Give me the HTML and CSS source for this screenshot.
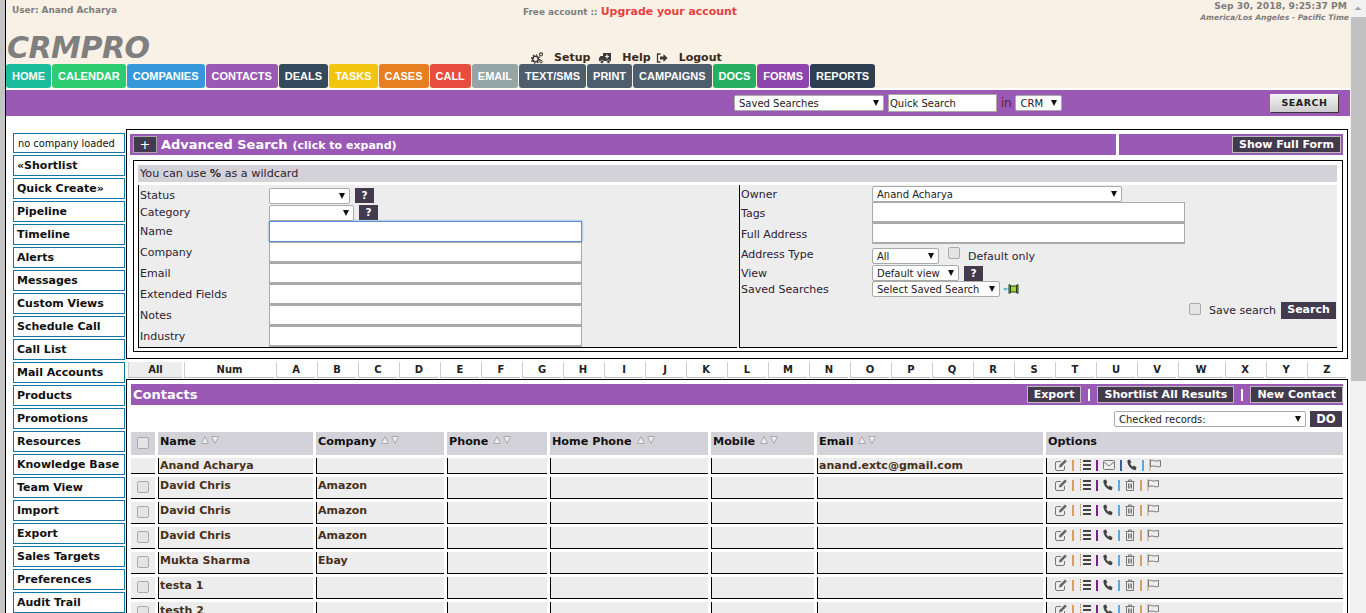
FILE: index.html
```html
<!DOCTYPE html>
<html lang="en">
<head>
    <meta charset="UTF-8">
    <title>CRMPRO</title>
    <link rel="stylesheet" href="styles.css">
</head>
<body>
<div class="window">
    <div class="edge"></div>
    <div class="page">
        <div class="top">
            <div class="top-info">
                <div class="user">User: Anand Acharya</div>
                <div class="account">Free account :: <a class="upgrade">Upgrade your account</a></div>
                <div class="clock"><span class="clock-date">Sep 30, 2018, 9:25:37 PM</span><br><em>America/Los Angeles - Pacific Time</em></div>
            </div>
            <div class="logo-row">
                <div class="logo">CRMPRO</div>
                <div class="top-links">
                    <svg class="tl-icon" viewBox="0 0 12 12"><circle cx="4.500" cy="7" r="2.800" fill="none" stroke="#3a3a3a" stroke-width="1.600"/><circle cx="4.500" cy="7" r="4.200" fill="none" stroke="#3a3a3a" stroke-width="1.200" stroke-dasharray="1.500 1.800"/><circle cx="10" cy="2.400" r="1.500" fill="none" stroke="#3a3a3a" stroke-width="1.100"/><circle cx="10" cy="9.600" r="1.300" fill="none" stroke="#3a3a3a"/></svg>
                    <span>Setup</span>
                    <svg class="tl-icon" viewBox="0 0 12 12"><path d="M4 1h8v8H4zM1.500 4H4v5H0V6z" fill="#3a3a3a"/><circle cx="3" cy="9.800" r="1.700" fill="#3a3a3a" stroke="#f9f1e6" stroke-width=".5"/><circle cx="9.500" cy="9.800" r="1.700" fill="#3a3a3a" stroke="#f9f1e6" stroke-width=".5"/><path d="M8 2.500v4M6 4.500h4" stroke="#f9f1e6" stroke-width="1.200"/></svg>
                    <span>Help</span>
                    <svg class="tl-icon out" viewBox="0 0 12 12"><path d="M4.500 2H1.500v8h3" fill="none" stroke="#3a3a3a" stroke-width="1.300"/><path d="M4 4.500h3.500V2l4 4-4 4V7.500H4z" fill="#3a3a3a"/></svg>
                    <span>Logout</span>
                </div>
            </div>
            <div class="tabs">
                <a class="tab" style="background:#1abc9c">HOME</a>
                <a class="tab" style="background:#2ecc71">CALENDAR</a>
                <a class="tab" style="background:#3498db">COMPANIES</a>
                <a class="tab" style="background:#9b59b6">CONTACTS</a>
                <a class="tab" style="background:#34495e">DEALS</a>
                <a class="tab" style="background:#f1c40f">TASKS</a>
                <a class="tab" style="background:#e67e22">CASES</a>
                <a class="tab" style="background:#e74c3c">CALL</a>
                <a class="tab" style="background:#95a5a6">EMAIL</a>
                <a class="tab" style="background:#4e5d6c">TEXT/SMS</a>
                <a class="tab" style="background:#4e5d6c">PRINT</a>
                <a class="tab" style="background:#4e5d6c">CAMPAIGNS</a>
                <a class="tab" style="background:#27ae60">DOCS</a>
                <a class="tab" style="background:#8e44ad">FORMS</a>
                <a class="tab" style="background:#2c3e50">REPORTS</a>
            </div>
        </div>

        <div class="searchbar">
            <div class="sel sel-saved">Saved Searches<i class="arrow"></i></div>
            <div class="quick">Quick Search</div>
            <span class="in">in</span>
            <div class="sel sel-crm">CRM<i class="arrow"></i></div>
            <div class="search-btn">SEARCH</div>
        </div>

        <div class="content">
            <div class="side">
                <div class="side-item plain">no company loaded</div>
                <div class="side-item">«Shortlist</div>
                <div class="side-item">Quick Create»</div>
                <div class="side-item">Pipeline</div>
                <div class="side-item">Timeline</div>
                <div class="side-item">Alerts</div>
                <div class="side-item">Messages</div>
                <div class="side-item">Custom Views</div>
                <div class="side-item">Schedule Call</div>
                <div class="side-item">Call List</div>
                <div class="side-item">Mail Accounts</div>
                <div class="side-item">Products</div>
                <div class="side-item">Promotions</div>
                <div class="side-item">Resources</div>
                <div class="side-item">Knowledge Base</div>
                <div class="side-item">Team View</div>
                <div class="side-item">Import</div>
                <div class="side-item">Export</div>
                <div class="side-item">Sales Targets</div>
                <div class="side-item">Preferences</div>
                <div class="side-item">Audit Trail</div>
            </div>

            <div class="main">
                <div class="adv">
                    <div class="adv-head">
                        <div class="bar bar-title"><span class="plus">+</span><b class="adv-title">Advanced Search</b><b class="adv-sub">(click to expand)</b></div>
                        <div class="bar bar-right"><span class="dark-btn">Show Full Form</span></div>
                    </div>
                    <div class="adv-form">
                        <div class="wild">You can use <b>%</b> as a wildcard</div>
                        <div class="form-cols">
                            <div class="form-col left-col">
                                <div class="row r-status"><label>Status</label><div class="sel s-status"><i class="arrow"></i></div><span class="q">?</span></div>
                                <div class="row r-cat"><label>Category</label><div class="sel s-cat"><i class="arrow"></i></div><span class="q">?</span></div>
                                <div class="row r-input"><label>Name</label><div class="field focus"></div></div>
                                <div class="row r-input"><label>Company</label><div class="field"></div></div>
                                <div class="row r-input"><label>Email</label><div class="field"></div></div>
                                <div class="row r-input"><label>Extended Fields</label><div class="field"></div></div>
                                <div class="row r-input"><label>Notes</label><div class="field"></div></div>
                                <div class="row r-input"><label>Industry</label><div class="field"></div></div>
                            </div>
                            <div class="form-col right-col">
                                <div class="row r-owner"><label>Owner</label><div class="sel s-owner">Anand Acharya<i class="arrow"></i></div></div>
                                <div class="row r-input"><label>Tags</label><div class="field"></div></div>
                                <div class="row r-input"><label>Full Address</label><div class="field"></div></div>
                                <div class="row r-type"><label>Address Type</label><div class="sel s-all">All<i class="arrow"></i></div><span class="check"></span><span class="chk-label">Default only</span></div>
                                <div class="row r-view"><label>View</label><div class="sel s-view">Default view<i class="arrow"></i></div><span class="q">?</span></div>
                                <div class="row r-saved"><label>Saved Searches</label><div class="sel s-sel">Select Saved Search<i class="arrow"></i></div>
                                    <svg class="pin" viewBox="0 0 16 10"><path d="M0 5l3-1.500v3z" fill="#3ab5c0"/><path d="M3 5h3" stroke="#3ab5c0"/><path d="M6 .5 8.500 2h4L15 .5v9L12.500 8h-4L6 9.500z" fill="#a8d838" stroke="#1f3a10"/><path d="M7.500 1v8M13.500 1v8" stroke="#1f3a10"/></svg>
                                </div>
                                <div class="row r-save"><span class="check"></span><span class="chk-label">Save search</span><span class="dark-solid">Search</span></div>
                            </div>
                        </div>
                    </div>
                </div>

                <div class="alpha">
                    <a class="active">All</a>
                    <a>Num</a>
                    <a>A</a><a>B</a><a>C</a><a>D</a><a>E</a><a>F</a><a>G</a><a>H</a><a>I</a><a>J</a><a>K</a><a>L</a><a>M</a><a>N</a><a>O</a><a>P</a><a>Q</a><a>R</a><a>S</a><a>T</a><a>U</a><a>V</a><a>W</a><a>X</a><a>Y</a><a>Z</a>
                </div>

                <div class="contacts">
                    <div class="bar contacts-head">
                        <b class="contacts-title">Contacts</b>
                        <div class="contacts-actions">
                            <span class="dark-btn">Export</span><i class="pipe"></i>
                            <span class="dark-btn">Shortlist All Results</span><i class="pipe"></i>
                            <span class="dark-btn">New Contact</span>
                        </div>
                    </div>
                    <div class="bulk">
                        <div class="sel s-checked">Checked records:<i class="arrow"></i></div>
                        <span class="do">DO</span>
                    </div>
                    <table class="grid">
                        <colgroup>
                            <col class="c-check"><col class="c-name"><col class="c-company"><col class="c-phone"><col class="c-home"><col class="c-mobile"><col class="c-email"><col>
                        </colgroup>
                        <thead>
                            <tr id="head"></tr>
                        </thead>
                        <tbody id="rows"></tbody>
                    </table>
                </div>
            </div>
        </div>
    </div>
    <div class="scrollbar">
        <svg class="scroll-up" viewBox="0 0 16 17"><path d="M4.500 10 8 6.500l3.500 3.500z" fill="#a3a3a3"/></svg>
        <div class="thumb"></div>
    </div>
</div>
<script>
    // table header
    const sort = '<svg class="sort" viewBox="0 0 19 8"><path d="M4 .5 7.500 7.500H.5zM10.500.5h7L14 7.500z" fill="#eee" stroke="#aaa"/></svg>';
    const columns = ['Name', 'Company', 'Phone', 'Home Phone', 'Mobile', 'Email'];
    document.getElementById('head').innerHTML =
        '<th class="center"><span class="check"></span></th>' +
        columns.map(c => `<th>${c} ${sort}</th>`).join('') +
        '<th>Options</th>';

    // option icons
    const icons = {
        edit: '<svg class="ico" viewBox="0 0 12 12"><path d="M9.500 7v3a1.500 1.500 0 0 1-1.500 1.500H2A1.500 1.500 0 0 1 .5 10V4A1.500 1.500 0 0 1 2 2.500h4" fill="none" stroke="#777"/><path d="M4 8.500l.5-2.500L10 .5l1.800 1.800L6.300 8z" fill="#666"/></svg>',
        list: '<svg class="ico" viewBox="0 0 12 12"><path d="M4 2h8M4 6h8M4 10h8" stroke="#444" stroke-width="1.800"/><path d="M1.500 0v12" stroke="#b58a5a" stroke-dasharray="1.500 1"/></svg>',
        mail: '<svg class="ico" viewBox="0 0 12 12"><rect x=".5" y="1.500" width="11" height="9" rx="1" fill="none" stroke="#777"/><path d="M1 3l5 4 5-4" fill="none" stroke="#777"/></svg>',
        phone: '<svg class="ico narrow" viewBox="0 0 10 12"><path d="M1.200 1 3 .5l1.300 3-1.100 1c.5 1.400 1.200 2.400 2.500 3.200l1-1.200 2.800 1.700-.5 2.200c-.3.700-1.100.9-1.900.7C3.500 9.800 1 7 .4 3 .2 2 .6 1.300 1.200 1z" fill="#444"/></svg>',
        trash: '<svg class="ico narrow" viewBox="0 0 10 12"><path d="M.5 2.500h9M3.500 2.500V1h3v1.500M1.500 2.500v9h7v-9M3.500 4.500v5M5 4.500v5M6.500 4.500v5" fill="none" stroke="#777"/></svg>',
        flag: '<svg class="ico" viewBox="0 0 12 12"><path d="M1 0v12" stroke="#b59a70"/><path d="M1.500 1.500c3-1 3.500 1 6 .5L11.500 1.500v6c-3 1-4.500-.5-6.500-.5-1 0-2.500.5-3.500.5z" fill="none" stroke="#777"/></svg>'
    };
    const sep = c => `<i class="sep" style="background:${c}"></i>`;
    const contacts = [
        ['Anand Acharya', '', 'anand.extc@gmail.com', true],
        ['David Chris', 'Amazon', ''],
        ['David Chris', 'Amazon', ''],
        ['David Chris', 'Amazon', ''],
        ['Mukta Sharma', 'Ebay', ''],
        ['testa 1', '', ''],
        ['testh 2', '', '']
    ];
    document.getElementById('rows').innerHTML = contacts.map(c => {
        const opts = c[3]
            ? icons.edit + sep('#d8a060') + icons.list + sep('#7a1f8a') + icons.mail + sep('#3a5f9a') + icons.phone + sep('#5aa8dc') + icons.flag
            : icons.edit + sep('#d8a060') + icons.list + sep('#7a1f8a') + icons.phone + sep('#5aa8dc') + icons.trash + sep('#d8a060') + icons.flag;
        return `<tr class="${c[3] ? 'me' : ''}">
            <td class="center">${c[3] ? '' : '<span class="check"></span>'}</td>
            <td>${c[0]}</td><td>${c[1]}</td><td></td><td></td><td></td><td>${c[2]}</td>
            <td class="opts">${opts}</td></tr>`;
    }).join('');
</script>
</body>
</html>
```

FILE: styles.css
```css
* {
    box-sizing: border-box;
}
html, body {
    margin: 0;
    padding: 0;
    height: 100%;
    overflow: hidden;
}
body {
    font-family: "DejaVu Sans", Verdana, sans-serif;
    font-size: 11px;
    color: #222;
    background: #fff;
}
.window {
    display: flex;
    height: 613px;
    overflow: hidden;
}
.edge {
    width: 6px;
    flex: none;
    background: #c4c4c4;
    border-right: 1px solid #000;
}
.page {
    width: 1344px;
    flex: none;
    overflow: hidden;
}
.scrollbar {
    width: 16px;
    flex: none;
    background: #f1f1f1;
}
.scroll-up {
    display: block;
    width: 16px;
    height: 17px;
}
.thumb {
    height: 364px;
    margin-left: 1px;
    width: 15px;
    background: #c1c1c1;
}

/* top area */
.top {
    height: 88px;
    background: #f9f1e6;
    display: flex;
    flex-direction: column;
}
.top-info {
    height: 33px;
    display: flex;
    justify-content: space-between;
    font-weight: bold;
    color: #7d7d7d;
}
.user {
    width: 517px;
    padding: 5px 0 0 6px;
    font-size: 8.900px;
}
.account {
    flex: 1;
    padding-top: 5px;
    font-size: 8.900px;
}
.upgrade {
    color: #e8403c;
    font-size: 10.900px;
}
.clock {
    text-align: right;
    padding-right: 1px;
    font-size: 9.200px;
    line-height: 11px;
}
.clock-date {
    margin-right: 2px;
}
.clock em {
    font-size: 7.600px;
}
.logo-row {
    height: 31px;
    display: flex;
}
.logo {
    width: 525px;
    padding-left: 1px;
    font-size: 30px;
    line-height: 30px;
    font-weight: bold;
    font-style: italic;
    color: #7f7f7f;
    letter-spacing: -.5px;
}
.top-links {
    display: flex;
    align-items: flex-end;
    font-size: 11px;
    font-weight: bold;
    color: #3b2a1a;
    line-height: 12px;
}
.top-links span {
    margin-right: 9px;
}
.tl-icon {
    width: 12px;
    height: 12px;
    margin-right: 11px;
}
.tl-icon.out {
    margin-left: -4px;
}
.tabs {
    height: 24px;
    display: flex;
    gap: 1px;
}
.tab {
    height: 24px;
    padding: 0 6px;
    border-radius: 3px;
    color: #fff;
    font-family: "Liberation Sans", Arial, sans-serif;
    font-size: 11px;
    font-weight: bold;
    line-height: 25px;
}

/* search strip */
.searchbar {
    height: 26px;
    margin-top: 2px;
    background: #9b59b6;
    display: flex;
    align-items: center;
    padding-left: 728px;
}
.sel {
    position: relative;
    height: 16px;
    background: #fff;
    border: 1px solid #aaa;
    border-radius: 2px;
    font-size: 10px;
    line-height: 15px;
    padding-left: 4px;
    color: #222;
    white-space: nowrap;
}
.arrow {
    position: absolute;
    right: 4px;
    top: 4px;
    border-left: 3.500px solid transparent;
    border-right: 3.500px solid transparent;
    border-top: 6px solid #111;
}
.sel-saved {
    width: 150px;
}
.quick {
    width: 109px;
    height: 18px;
    margin-left: 4px;
    background: #fff;
    border: 1px solid #aaa;
    padding-left: 1px;
    font-size: 10px;
    line-height: 17px;
}
.in {
    margin: 0 4px 0 4px;
    color: #5a1f10;
    font-size: 11.500px;
}
.sel-crm {
    width: 47px;
}
.search-btn {
    width: 68px;
    height: 18px;
    margin: -1px 0 0 208px;
    background: linear-gradient(#f4f4f4, #ccc);
    box-shadow: 1px 1px 0 #333;
    text-align: center;
    font-weight: bold;
    font-size: 9.500px;
    letter-spacing: .5px;
    line-height: 17px;
}

/* sidebar and main */
.content {
    display: flex;
    padding: 13px 0 0 7px;
}
.side {
    width: 113px;
    flex: none;
    display: flex;
    flex-direction: column;
    gap: 2px;
    padding: 4px 1px 0 0;
}
.side-item {
    height: 21px;
    border: 1px solid #0f76a8;
    font-size: 11px;
    font-weight: bold;
    color: #111;
    padding-left: 3px;
    line-height: 19px;
    white-space: nowrap;
}
.side-item.plain {
    height: 20px;
    padding-left: 4px;
    font-size: 9.800px;
    font-weight: normal;
}
.main {
    width: 1222px;
    flex: none;
}
.adv {
    height: 230px;
    border: 1px solid #000;
    padding: 4px 4px 0 3px;
}
.adv-head {
    display: flex;
    gap: 3px;
    height: 21px;
}
.bar {
    background: #9b59b6;
    color: #fff;
}
.bar-title {
    width: 986px;
    display: flex;
    align-items: center;
    padding-left: 3px;
    white-space: nowrap;
}
.bar-right {
    flex: 1;
    display: flex;
    justify-content: flex-end;
    align-items: center;
    padding-right: 2px;
}
.plus {
    width: 24px;
    height: 17px;
    background: #433a4d;
    border: 1px solid #aaa;
    text-align: center;
    font-size: 13px;
    line-height: 16px;
    margin-right: 4px;
}
.adv-title {
    font-size: 13px;
}
.adv-sub {
    font-size: 11px;
    margin: 1px 0 0 5px;
}
.dark-btn {
    display: inline-block;
    height: 17px;
    padding: 0 6px;
    background: #433a4d;
    border: 1px solid #bbb;
    color: #fff;
    font-size: 11px;
    font-weight: bold;
    line-height: 16px;
}
.adv-form {
    margin: 5px 0 0 3px;
    height: 192px;
    border: 1px solid #000;
    padding: 4px 5px 0 4px;
}
.wild {
    height: 17px;
    background: #d4d2d9;
    font-size: 11.200px;
    line-height: 18px;
    padding-left: 2px;
    color: #2c2233;
}
.form-cols {
    display: flex;
    gap: 2px;
    margin-top: 3px;
    height: 163px;
    background: #ededed;
}
.form-col {
    border-left: 1px solid #000;
    border-bottom: 1px solid #000;
    padding-left: 1px;
}
.left-col {
    width: 599px;
    padding-top: 2px;
}
.right-col {
    flex: 1;
    padding-top: 1px;
}
.row {
    display: flex;
    align-items: center;
}
.row label {
    flex: none;
    width: 129px;
    font-size: 11px;
    color: #2c2233;
    white-space: nowrap;
}
.right-col label {
    width: 131px;
}
.right-col .r-input label,
.r-saved label {
    margin-top: 1px;
}
.field {
    width: 313px;
    height: 21px;
    background: #fff;
    border: 1px solid #aaa;
    border-bottom-width: 2px;
}
.field.focus {
    border: 1px solid #5b8fd9;
    box-shadow: 0 0 2px #5b8fd9;
}
.q {
    width: 19px;
    height: 15px;
    margin-left: 5px;
    background: #433a4d;
    color: #fff;
    text-align: center;
    font-size: 10.500px;
    font-weight: bold;
    line-height: 15px;
}
.r-status,
.r-cat {
    height: 17px;
}
.r-input {
    height: 21px;
}
.s-status {
    width: 81px;
}
.s-cat {
    width: 85px;
}
.r-owner {
    height: 16px;
}
.s-owner {
    width: 250px;
}
.r-type {
    height: 21px;
}
.s-all {
    width: 67px;
    margin-top: 3px;
}
.check {
    display: inline-block;
    flex: none;
    width: 12px;
    height: 12px;
    background: #e4e4e4;
    border: 1px solid #aaa;
    border-radius: 2px;
}
.r-type .check {
    margin: 0 8px 3px 9px;
}
.chk-label {
    font-size: 11px;
    color: #2c2233;
}
.r-type .chk-label {
    margin-top: 3px;
}
.r-view,
.r-saved {
    height: 16px;
}
.s-view {
    width: 87px;
}
.s-sel {
    width: 128px;
}
.pin {
    width: 16px;
    height: 10px;
    margin-left: 3px;
}
.r-save {
    justify-content: flex-end;
    padding: 5px 1px 0 0;
}
.r-save .check {
    margin: 0 8px 3px 0;
}
.dark-solid {
    margin-left: 5px;
    width: 55px;
    height: 17px;
    background: #433a4d;
    color: #fff;
    text-align: center;
    font-weight: bold;
    font-size: 11px;
    line-height: 16px;
}

/* letters */
.alpha {
    display: grid;
    grid-template-columns: 56px 92px repeat(22, 41px) 47px repeat(3, 41px);
    height: 20px;
    padding: 3px 0 0 1px;
    text-align: center;
    font-weight: bold;
    font-size: 10px;
    line-height: 15px;
}
.alpha a {
    height: 16px;
    margin: 0 1px 0 1px;
    border-bottom: 1px solid #bbb;
    border-left: 1px solid #ccc;
}
.alpha .active {
    background: #ededed;
}

/* contacts */
.contacts {
    border: 1px solid #000;
    padding: 4px 4px 0 4px;
    height: 300px;
}
.contacts-head {
    height: 21px;
    display: flex;
    justify-content: space-between;
    align-items: center;
}
.contacts-title {
    font-size: 13px;
    padding-left: 2px;
}
.contacts-actions {
    display: flex;
    align-items: center;
    gap: 7px;
}
.pipe {
    width: 2px;
    height: 12px;
    background: #fff;
}
.bulk {
    height: 27px;
    display: flex;
    justify-content: flex-end;
    align-items: center;
    padding-right: 1px;
}
.s-checked {
    width: 192px;
}
.do {
    width: 32px;
    height: 16px;
    margin-left: 4px;
    background: #433a4d;
    color: #fff;
    text-align: center;
    font-weight: bold;
    font-size: 11.500px;
    line-height: 16px;
}
.grid {
    width: calc(100% + 6px);
    table-layout: fixed;
    border-collapse: separate;
    border-spacing: 3px;
    margin: -3px 0 0 -3px;
}
.c-check { width: 24px; }
.c-name { width: 155px; }
.c-company { width: 128px; }
.c-phone { width: 100px; }
.c-home { width: 158px; }
.c-mobile { width: 103px; }
.c-email { width: 226px; }
.grid th {
    height: 23px;
    background: #d4d2d9;
    color: #111;
    font-size: 11.200px;
    text-align: left;
    padding: 0 0 5px 2px;
    white-space: nowrap;
}
.sort {
    width: 19px;
    height: 8px;
    margin-left: 1px;
    vertical-align: 1px;
}
.grid td {
    height: 22px;
    padding: 0 0 4px 1px;
    background: #ededed;
    border-bottom: 1px solid #000;
    border-left: 1px solid #000;
    color: #47311c;
    font-size: 11px;
    font-weight: bold;
    white-space: nowrap;
    vertical-align: middle;
}
.grid td:first-child {
    border-left: 0;
}
.grid .me td {
    height: 16px;
    padding: 1px 0 0 1px;
    line-height: 14px;
}
.grid td.center,
.grid th.center {
    padding: 2px 0 0;
    text-align: center;
}
.grid td.opts {
    padding-left: 8px;
}
.ico {
    width: 12px;
    height: 12px;
    vertical-align: -2px;
}
.ico.narrow {
    width: 10px;
}
.sep {
    display: inline-block;
    width: 2px;
    height: 11px;
    margin: 0 5px;
    vertical-align: -2px;
}
```
